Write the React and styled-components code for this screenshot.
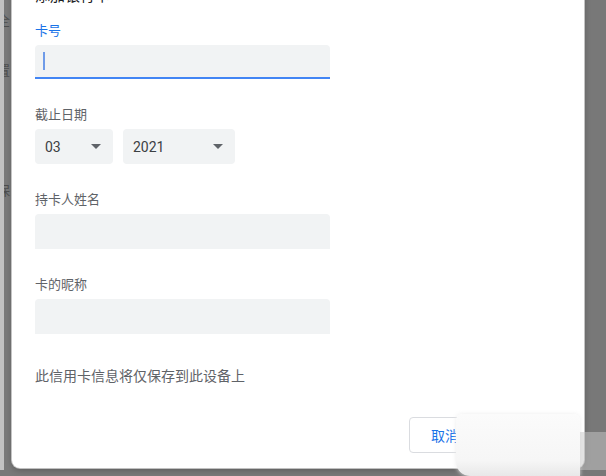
import React from 'react'
import styled, { createGlobalStyle } from 'styled-components'

const GlobalStyle = createGlobalStyle`
    body {
        margin: 0;
        background: #787878;
        font-family: Roboto, "Noto Sans CJK SC", sans-serif;
    }
`

const Frame = styled.div`
    height: 476px;
    overflow: hidden;
    display: flex;
    align-items: flex-start;
    background: #787878;
    position: relative;
`

const SideStrip = styled.div`
    width: 8px;
    height: 470px;
    border-left: 4px solid #c2c2c2;
    background: #7a7a7a;
    overflow: hidden;
    display: flex;
    flex-direction: column;
`

const Fragment = styled.span`
    margin-top: ${p => p.top}px;
    margin-left: -7px;
    font-size: 13px;
    line-height: 14px;
    color: #3a3a3a;
    opacity: 0.7;
`

const Dialog = styled.div`
    width: 549px;
    height: 482px;
    margin-top: -16px;
    padding: 2px 0 0 23px;
    background: #fff;
    border-radius: 0 0 8px 8px;
    box-shadow: 0 0 0 1px rgba(255, 255, 255, 0.6), 0 2px 6px rgba(0, 0, 0, 0.25);
    display: flex;
    flex-direction: column;
`

const Title = styled.h2`
    margin: 0 0 17px;
    font-size: 15px;
    line-height: 20px;
    font-weight: 400;
    color: #202124;
`

const Field = styled.div`
    display: flex;
    flex-direction: column;
    margin-bottom: 28px;
`

const Label = styled.div`
    font-size: 13px;
    line-height: 16px;
    margin-bottom: 6px;
    color: ${p => (p.active ? '#1a73e8' : '#5f6368')};
`

const TextBox = styled.div`
    width: 295px;
    height: ${p => p.h}px;
    box-sizing: border-box;
    background: #f1f3f4;
    border-radius: 4px 4px 0 0;
    border-bottom: 2px solid ${p => (p.active ? '#4285f4' : 'transparent')};
    display: flex;
    align-items: center;
    padding-left: 8px;
`

const Caret = styled.span`
    width: 2px;
    height: 18px;
    background: #6f9be8;
`

const SelectRow = styled.div`
    display: flex;
    gap: 10px;
`

const Select = styled.div`
    width: ${p => p.w}px;
    height: 35px;
    box-sizing: border-box;
    background: #f1f3f4;
    border-radius: 4px;
    display: flex;
    align-items: center;
    justify-content: space-between;
    padding: 0 12px 0 10px;
    font-size: 14px;
    color: #3c4043;
`

const Arrow = styled.span`
    width: 0;
    height: 0;
    border-left: 5px solid transparent;
    border-right: 5px solid transparent;
    border-top: 5px solid #5f6368;
`

const Note = styled.p`
    margin: 4px 0 0;
    font-size: 14px;
    line-height: 20px;
    color: #5f6368;
`

const Actions = styled.div`
    margin-top: 31px;
    padding-right: 20px;
    display: flex;
    justify-content: flex-end;
    gap: 8px;
`

const Button = styled.button`
    height: 36px;
    width: ${p => p.w}px;
    border-radius: 4px;
    font-family: inherit;
    font-size: 14px;
    border: 1px solid ${p => (p.primary ? '#1a73e8' : '#dadce0')};
    background: ${p => (p.primary ? '#1a73e8' : '#fff')};
    color: ${p => (p.primary ? '#fff' : '#1a73e8')};
`

const Smudge = styled.div`
    position: absolute;
    left: 456px;
    top: 414px;
    width: 124px;
    height: 62px;
    background: linear-gradient(180deg, #fbfbfb 0%, #f6f6f6 75%, #e8e8e8 100%);
    border-radius: 6px 6px 0 14px;
    box-shadow: 0 0 4px rgba(235, 235, 235, 0.9);
`

const SmudgeEdge = styled.div`
    position: absolute;
    left: 580px;
    top: 432px;
    width: 26px;
    height: 38px;
    background: rgba(200, 200, 200, 0.5);
`

const App = () => {
    return (
        <>
            <GlobalStyle />
            <Frame>
                <SideStrip>
                    <Fragment top={14}>全</Fragment>
                    <Fragment top={36}>置</Fragment>
                    <Fragment top={106}>保</Fragment>
                </SideStrip>
                <Dialog>
                    <Title>添加银行卡</Title>
                    <Field>
                        <Label active>卡号</Label>
                        <TextBox h={34} active>
                            <Caret />
                        </TextBox>
                    </Field>
                    <Field>
                        <Label>截止日期</Label>
                        <SelectRow>
                            <Select w={78}>03<Arrow /></Select>
                            <Select w={112}>2021<Arrow /></Select>
                        </SelectRow>
                    </Field>
                    <Field>
                        <Label>持卡人姓名</Label>
                        <TextBox h={35} />
                    </Field>
                    <Field>
                        <Label>卡的昵称</Label>
                        <TextBox h={35} />
                    </Field>
                    <Note>此信用卡信息将仅保存到此设备上</Note>
                    <Actions>
                        <Button w={72}>取消</Button>
                        <Button w={75} primary>保存</Button>
                    </Actions>
                </Dialog>
                <Smudge />
                <SmudgeEdge />
            </Frame>
        </>
    )
}

export default App
